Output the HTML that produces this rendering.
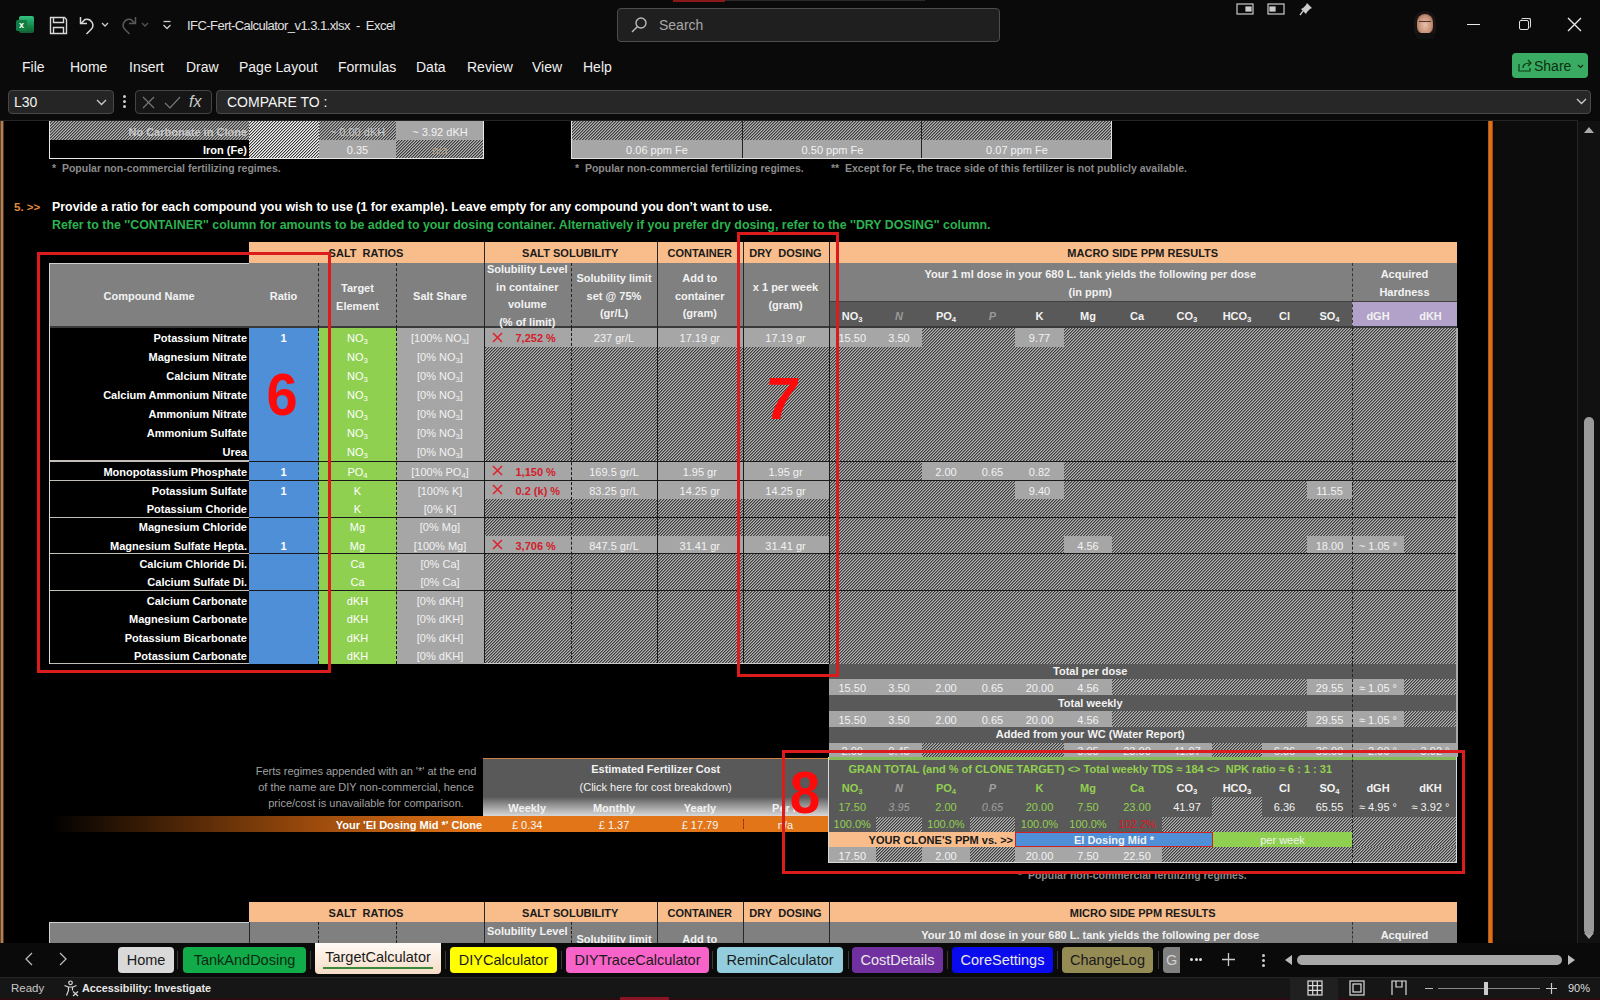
<!DOCTYPE html><html><head><meta charset="utf-8"><style>
html,body{margin:0;padding:0;width:1600px;height:1000px;overflow:hidden;background:#0a0a0a;font-family:"Liberation Sans",sans-serif;}
:root{--hd:repeating-linear-gradient(135deg,#3c3c3c 0px,#3c3c3c 0.7071px,#7a7a7a 0.7071px,#7a7a7a 1.4142px,#b4b4b4 1.4142px,#b4b4b4 2.1213px);--hl:repeating-linear-gradient(135deg,#383838 0px,#383838 0.7071px,#b0b0b0 0.7071px,#b0b0b0 1.4142px,#f4f4f4 1.4142px,#f4f4f4 2.1213px);}
.a{position:absolute;box-sizing:border-box;}
.t{position:absolute;display:flex;align-items:center;white-space:nowrap;line-height:1;box-sizing:border-box;}
sub{font-size:70%;vertical-align:-2px;line-height:0;}
.ch{color:#fff;}
</style></head><body>

<div class="a" style="left:0px;top:0px;width:1600px;height:121px;background:#0a0a0a;"></div>
<div class="a" style="left:19px;top:16px;width:15px;height:17px;background:linear-gradient(#33c481 0,#21a366 30%,#107c41 70%,#185c37 100%);border-radius:2px;"></div>
<div class="a" style="left:16px;top:20px;width:11px;height:11px;background:#107c41;border-radius:1.5px;"></div>
<div class="t" style="left:16px;top:20px;width:11px;height:11px;justify-content:center;color:#fff;font-size:9px;font-weight:bold;padding-top:0px;"><span>x</span></div>
<svg class="a" style="left:49px;top:16px" width="19" height="19" viewBox="0 0 19 19" fill="none" stroke="#d8d8d8" stroke-width="1.4"><path d="M1.5 1.5h14l2 2v14h-16z"/><path d="M4.5 1.5v5h10v-5"/><path d="M4.5 17.5v-6h10v6"/></svg>
<svg class="a" style="left:78px;top:15px" width="20" height="20" viewBox="0 0 20 20" fill="none" stroke="#d8d8d8" stroke-width="1.5"><path d="M2.5 2v6.5h6.5"/><path d="M3 8.5L7 4.5A6 6 0 0 1 13 14.5L8.5 19"/></svg>
<svg class="a" style="left:101px;top:22px" width="8" height="6" viewBox="0 0 8 6" fill="none" stroke="#ccc" stroke-width="1.3"><path d="M1 1l3 3 3-3"/></svg>
<svg class="a" style="left:118px;top:15px" width="20" height="20" viewBox="0 0 20 20" fill="none" stroke="#5a5a5a" stroke-width="1.5"><path d="M17.5 2v6.5h-6.5"/><path d="M17 8.5L13 4.5A6 6 0 0 0 7 14.5L11.5 19"/></svg>
<svg class="a" style="left:141px;top:22px" width="8" height="6" viewBox="0 0 8 6" fill="none" stroke="#555" stroke-width="1.3"><path d="M1 1l3 3 3-3"/></svg>
<svg class="a" style="left:162px;top:20px" width="10" height="10" viewBox="0 0 10 10" fill="none" stroke="#ccc" stroke-width="1.3"><path d="M1.5 1.5h7"/><path d="M1.5 5l3.5 3.5L8.5 5"/></svg>
<div class="t" style="left:187px;top:14px;width:173px;height:22px;justify-content:flex-start;color:#e0e0e0;font-size:13px;font-weight:normal;padding-top:0px;letter-spacing:-0.55px;"><span>IFC-Fert-Calculator_v1.3.1.xlsx&nbsp; - &nbsp;Excel</span></div>
<div class="a" style="left:617px;top:8px;width:383px;height:34px;background:#1f1f1f;border:1px solid #4d4d4d;border-radius:4px;"></div>
<svg class="a" style="left:630px;top:16px" width="18" height="18" viewBox="0 0 18 18" fill="none" stroke="#bbb" stroke-width="1.4"><circle cx="11" cy="7" r="5"/><path d="M7.5 10.5L2 16"/></svg>
<div class="t" style="left:659px;top:14px;width:101px;height:22px;justify-content:flex-start;color:#a8a8a8;font-size:14px;font-weight:normal;padding-top:0px;"><span>Search</span></div>
<div class="a" style="left:673px;top:0px;width:52px;height:2px;background:#8a1a1a;"></div>
<div class="a" style="left:725px;top:0px;width:200px;height:1px;background:#2a2a2a;"></div>
<svg class="a" style="left:1236px;top:2px" width="20" height="14" viewBox="0 0 20 14" fill="none" stroke="#ccc" stroke-width="1.2"><rect x="1" y="2" width="16" height="10"/><rect x="10" y="5" width="5" height="4" fill="#ccc"/></svg>
<svg class="a" style="left:1267px;top:2px" width="20" height="14" viewBox="0 0 20 14" fill="none" stroke="#ccc" stroke-width="1.2"><rect x="1" y="2" width="16" height="10"/><rect x="3" y="5" width="5" height="4" fill="#ccc"/></svg>
<svg class="a" style="left:1299px;top:2px" width="14" height="14" viewBox="0 0 14 14" fill="#ccc"><path d="M8 1l5 5-2 1-3 3-1 2-5-5 2-1 3-3z"/><path d="M4 9l-3 4" stroke="#ccc" stroke-width="1.3"/></svg>
<div class="a" style="left:1414px;top:11px;width:22px;height:28px;border-radius:11px 11px 9px 9px;background:#1a1412;"></div>
<div class="a" style="left:1417px;top:14px;width:16px;height:20px;border-radius:8px 8px 7px 7px;background:radial-gradient(ellipse at 50% 55%,#e8c0a8 0,#c89278 55%,#6a4a3c 100%);"></div>
<div class="a" style="left:1416px;top:33px;width:18px;height:6px;background:#101010;border-radius:4px 4px 2px 2px;"></div>
<div class="a" style="left:1419px;top:21px;width:12px;height:1px;background:#4a3a34;"></div>
<div class="a" style="left:1467px;top:24px;width:13px;height:1px;background:#e8e8e8;"></div>
<div class="a" style="left:1519px;top:20px;width:10px;height:10px;border:1.3px solid #e0e0e0;border-radius:2px;"></div>
<div class="a" style="left:1521px;top:18px;width:10px;height:10px;border-top:1.3px solid #e0e0e0;border-right:1.3px solid #e0e0e0;border-radius:2px;"></div>
<svg class="a" style="left:1567px;top:17px" width="15" height="15" viewBox="0 0 15 15" stroke="#e8e8e8" stroke-width="1.4"><path d="M1 1l13 13M14 1L1 14"/></svg>
<div class="t" style="left:22px;top:56px;width:120px;height:21px;justify-content:flex-start;color:#f0f0f0;font-size:14px;font-weight:normal;padding-top:0px;"><span>File</span></div>
<div class="t" style="left:70px;top:56px;width:120px;height:21px;justify-content:flex-start;color:#f0f0f0;font-size:14px;font-weight:normal;padding-top:0px;"><span>Home</span></div>
<div class="t" style="left:129px;top:56px;width:120px;height:21px;justify-content:flex-start;color:#f0f0f0;font-size:14px;font-weight:normal;padding-top:0px;"><span>Insert</span></div>
<div class="t" style="left:186px;top:56px;width:120px;height:21px;justify-content:flex-start;color:#f0f0f0;font-size:14px;font-weight:normal;padding-top:0px;"><span>Draw</span></div>
<div class="t" style="left:239px;top:56px;width:120px;height:21px;justify-content:flex-start;color:#f0f0f0;font-size:14px;font-weight:normal;padding-top:0px;"><span>Page Layout</span></div>
<div class="t" style="left:338px;top:56px;width:120px;height:21px;justify-content:flex-start;color:#f0f0f0;font-size:14px;font-weight:normal;padding-top:0px;"><span>Formulas</span></div>
<div class="t" style="left:416px;top:56px;width:120px;height:21px;justify-content:flex-start;color:#f0f0f0;font-size:14px;font-weight:normal;padding-top:0px;"><span>Data</span></div>
<div class="t" style="left:467px;top:56px;width:120px;height:21px;justify-content:flex-start;color:#f0f0f0;font-size:14px;font-weight:normal;padding-top:0px;"><span>Review</span></div>
<div class="t" style="left:532px;top:56px;width:120px;height:21px;justify-content:flex-start;color:#f0f0f0;font-size:14px;font-weight:normal;padding-top:0px;"><span>View</span></div>
<div class="t" style="left:583px;top:56px;width:120px;height:21px;justify-content:flex-start;color:#f0f0f0;font-size:14px;font-weight:normal;padding-top:0px;"><span>Help</span></div>
<div class="a" style="left:1512px;top:53px;width:76px;height:25px;background:#4caf50;border-radius:4px;background:#3aab62;"></div>
<svg class="a" style="left:1518px;top:59px" width="14" height="13" viewBox="0 0 14 13" fill="none" stroke="#0a3a10" stroke-width="1.2"><path d="M1 5v7h11v-3"/><path d="M5 9c0-4 3-5 7-5"/><path d="M10 1l3 3-3 3"/></svg>
<div class="t" style="left:1534px;top:56px;width:41px;height:20px;justify-content:flex-start;color:#0d2f12;font-size:14px;font-weight:normal;padding-top:0px;"><span>Share</span></div>
<svg class="a" style="left:1577px;top:64px" width="7" height="5" viewBox="0 0 7 5" fill="none" stroke="#0d2f12" stroke-width="1.2"><path d="M1 1l2.5 2.5L6 1"/></svg>
<div class="a" style="left:8px;top:90px;width:106px;height:24px;background:#252525;border:1px solid #484848;border-radius:4px;"></div>
<div class="t" style="left:14px;top:90px;width:46px;height:24px;justify-content:flex-start;color:#f0f0f0;font-size:14px;font-weight:normal;padding-top:0px;"><span>L30</span></div>
<svg class="a" style="left:96px;top:99px" width="11" height="7" viewBox="0 0 11 7" fill="none" stroke="#ccc" stroke-width="1.3"><path d="M1 1l4.5 4.5L10 1"/></svg>
<div class="a" style="left:123px;top:95px;width:3px;height:3px;background:#ccc;border-radius:2px;"></div>
<div class="a" style="left:123px;top:100px;width:3px;height:3px;background:#ccc;border-radius:2px;"></div>
<div class="a" style="left:123px;top:105px;width:3px;height:3px;background:#ccc;border-radius:2px;"></div>
<div class="a" style="left:135px;top:90px;width:77px;height:24px;background:#161616;border:1px solid #444;border-radius:4px;"></div>
<svg class="a" style="left:142px;top:96px" width="13" height="13" viewBox="0 0 13 13" stroke="#777" stroke-width="1.2"><path d="M1 1l11 11M12 1L1 12"/></svg>
<svg class="a" style="left:164px;top:96px" width="17" height="13" viewBox="0 0 17 13" fill="none" stroke="#777" stroke-width="1.2"><path d="M1 7l5 5L16 1"/></svg>
<div class="t" style="left:189px;top:91px;width:21px;height:22px;justify-content:flex-start;color:#c8c8c8;font-size:16px;font-weight:normal;padding-top:0px;font-family:"Liberation Serif",serif;"><span><i>fx</i></span></div>
<div class="a" style="left:216px;top:90px;width:1375px;height:24px;background:#272727;border:1px solid #4a4a4a;border-radius:4px;"></div>
<div class="t" style="left:227px;top:90px;width:273px;height:24px;justify-content:flex-start;color:#f5f5f5;font-size:14px;font-weight:normal;padding-top:0px;"><span>COMPARE TO :</span></div>
<svg class="a" style="left:1576px;top:98px" width="11" height="7" viewBox="0 0 11 7" fill="none" stroke="#ccc" stroke-width="1.3"><path d="M1 1l4.5 4.5L10 1"/></svg>
<div class="a" style="left:0px;top:121px;width:1578px;height:822px;background:#000;"></div>
<div class="a" style="left:0px;top:120px;width:1578px;height:1px;background:#242424;"></div>
<div class="a" style="left:0px;top:121px;width:1px;height:822px;background:#5e4630;"></div>
<div class="a" style="left:1px;top:121px;width:2px;height:822px;background:#b08058;"></div>
<div class="a" style="left:3px;top:121px;width:1px;height:822px;background:#5a3010;"></div>
<div class="a" style="left:1488px;top:121px;width:1px;height:822px;background:#b05a20;"></div>
<div class="a" style="left:1489px;top:121px;width:3px;height:822px;background:#dc7014;"></div>
<div class="a" style="left:1492px;top:121px;width:1px;height:822px;background:#9a4814;"></div>
<div class="a" style="left:1493px;top:121px;width:2px;height:822px;background:#140404;"></div>
<div class="a" style="left:1495px;top:121px;width:83px;height:822px;background:#0c0c0c;"></div>
<div class="a" style="left:1577px;top:121px;width:1px;height:822px;background:#262626;"></div>
<div class="a" style="left:1578px;top:121px;width:22px;height:822px;background:#111111;"></div>
<svg class="a" style="left:1583px;top:125px" width="12" height="9" viewBox="0 0 12 9" fill="#aaa"><path d="M1 8L6 2l5 6z"/></svg>
<svg class="a" style="left:1583px;top:932px" width="12" height="9" viewBox="0 0 12 9" fill="#aaa"><path d="M1 1l5 6 5-6z"/></svg>
<div class="a" style="left:1584px;top:417px;width:10px;height:518px;background:#9a9a9a;border-radius:5px;"></div>
<div class="a" style="left:49px;top:121px;width:200px;height:19px;background:var(--hd);"></div>
<div class="t" style="left:49px;top:121px;width:198px;height:19px;justify-content:flex-end;color:#c8c8c8;font-size:11px;font-weight:bold;padding-top:3px;"><span>No Carbonate in Clone</span></div>
<div class="a" style="left:249px;top:121px;width:70px;height:37px;background:var(--hl);"></div>
<div class="a" style="left:319px;top:121px;width:77px;height:19px;background:var(--hd);"></div>
<div class="t" style="left:319px;top:121px;width:77px;height:19px;justify-content:center;color:#c8c8c8;font-size:11px;font-weight:normal;padding-top:3px;"><span>~ 0.00 dKH</span></div>
<div class="a" style="left:396px;top:121px;width:88px;height:19px;background:#a6a6a6;"></div>
<div class="t" style="left:396px;top:121px;width:88px;height:19px;justify-content:center;color:#f2f2f2;font-size:11px;font-weight:normal;padding-top:3px;"><span>~ 3.92 dKH</span></div>
<div class="a" style="left:49px;top:140px;width:200px;height:18px;background:#000;"></div>
<div class="t" style="left:49px;top:140px;width:198px;height:18px;justify-content:flex-end;color:#fff;font-size:11px;font-weight:bold;padding-top:3px;"><span>Iron (Fe)</span></div>
<div class="a" style="left:319px;top:140px;width:77px;height:18px;background:#a6a6a6;"></div>
<div class="t" style="left:319px;top:140px;width:77px;height:18px;justify-content:center;color:#f2f2f2;font-size:11px;font-weight:normal;padding-top:3px;"><span>0.35</span></div>
<div class="a" style="left:396px;top:140px;width:88px;height:18px;background:var(--hd);"></div>
<div class="t" style="left:396px;top:140px;width:88px;height:18px;justify-content:center;color:#b8a890;font-size:11px;font-weight:normal;padding-top:3px;"><span>n/a</span></div>
<div class="a" style="left:49px;top:121px;width:435px;height:38px;border:1px solid #e8e8e8;border-top:none;"></div>
<div class="t" style="left:52px;top:158px;width:348px;height:18px;justify-content:flex-start;color:#8c8c8c;font-size:10.5px;font-weight:bold;padding-top:3px;"><span>*&nbsp; Popular non-commercial fertilizing regimes.</span></div>
<div class="a" style="left:571px;top:121px;width:541px;height:19px;background:var(--hd);"></div>
<div class="a" style="left:571px;top:140px;width:541px;height:18px;background:#a6a6a6;"></div>
<div class="t" style="left:571px;top:140px;width:172px;height:18px;justify-content:center;color:#f2f2f2;font-size:11px;font-weight:normal;padding-top:3px;"><span>0.06 ppm Fe</span></div>
<div class="t" style="left:743px;top:140px;width:179px;height:18px;justify-content:center;color:#f2f2f2;font-size:11px;font-weight:normal;padding-top:3px;"><span>0.50 ppm Fe</span></div>
<div class="t" style="left:922px;top:140px;width:190px;height:18px;justify-content:center;color:#f2f2f2;font-size:11px;font-weight:normal;padding-top:3px;"><span>0.07 ppm Fe</span></div>
<div class="a" style="left:742px;top:121px;width:1px;height:37px;background:#222;"></div>
<div class="a" style="left:921px;top:121px;width:1px;height:37px;background:#222;"></div>
<div class="a" style="left:571px;top:121px;width:541px;height:38px;border:1px solid #e0e0e0;border-top:none;"></div>
<div class="t" style="left:575px;top:158px;width:255px;height:18px;justify-content:flex-start;color:#8c8c8c;font-size:10.5px;font-weight:bold;padding-top:3px;"><span>*&nbsp; Popular non-commercial fertilizing regimes.</span></div>
<div class="t" style="left:831px;top:158px;width:469px;height:18px;justify-content:flex-start;color:#8c8c8c;font-size:10.5px;font-weight:bold;padding-top:3px;"><span>**&nbsp; Except for Fe, the trace side of this fertilizer is not publicly available.</span></div>
<div class="t" style="left:14px;top:197px;width:36px;height:18px;justify-content:flex-start;color:#e08a3c;font-size:11.5px;font-weight:bold;padding-top:3px;"><span>5. &gt;&gt;</span></div>
<div class="t" style="left:52px;top:197px;width:748px;height:18px;justify-content:flex-start;color:#ffffff;font-size:12.4px;font-weight:bold;padding-top:3px;"><span>Provide a ratio for each compound you wish to use (1 for example). Leave empty for any compound you don’t want to use.</span></div>
<div class="t" style="left:52px;top:215px;width:948px;height:18px;justify-content:flex-start;color:#2cb24f;font-size:12.4px;font-weight:bold;padding-top:3px;"><span>Refer to the ''CONTAINER'' column for amounts to be added to your dosing container. Alternatively if you prefer dry dosing, refer to the ''DRY DOSING'' column.</span></div>
<div class="a" style="left:248.5px;top:241.5px;width:1208.5px;height:21.0px;background:#f8bd8b;"></div>
<div class="t" style="left:248.5px;top:241.5px;width:235.0px;height:21.0px;justify-content:center;color:#1a1a1a;font-size:11px;font-weight:bold;padding-top:3px;"><span>SALT&nbsp; RATIOS</span></div>
<div class="t" style="left:483.5px;top:241.5px;width:173.5px;height:21.0px;justify-content:center;color:#1a1a1a;font-size:11px;font-weight:bold;padding-top:3px;"><span>SALT SOLUBILITY</span></div>
<div class="t" style="left:657px;top:241.5px;width:85.5px;height:21.0px;justify-content:center;color:#1a1a1a;font-size:11px;font-weight:bold;padding-top:3px;"><span>CONTAINER</span></div>
<div class="t" style="left:742.5px;top:241.5px;width:86.0px;height:21.0px;justify-content:center;color:#1a1a1a;font-size:11px;font-weight:bold;padding-top:3px;"><span>DRY&nbsp; DOSING</span></div>
<div class="t" style="left:828.5px;top:241.5px;width:628.5px;height:21.0px;justify-content:center;color:#1a1a1a;font-size:11px;font-weight:bold;padding-top:3px;"><span>MACRO SIDE PPM RESULTS</span></div>
<div class="a" style="left:49.5px;top:262.5px;width:1407.5px;height:65.0px;background:#808080;"></div>
<div class="a" style="left:828.5px;top:301.5px;width:523.5px;height:26.0px;background:#595959;"></div>
<div class="a" style="left:1352px;top:301.5px;width:105px;height:26.0px;background:#b2a1c8;"></div>
<div class="a" style="left:828.5px;top:301px;width:628.5px;height:1.1999999999999886px;background:#404040;"></div>
<div class="a" style="left:49.5px;top:326.3px;width:1407.5px;height:1.3999999999999773px;background:#3a3a3a;"></div>
<div class="a" style="left:49.5px;top:262.5px;width:199.0px;height:1.0px;background:#cfcfcf;"></div>
<div class="a" style="left:49px;top:262.5px;width:1px;height:65.0px;background:#d0d0d0;"></div>
<div class="t" style="left:49.5px;top:262.5px;width:199.0px;height:65.0px;justify-content:center;color:#f2f2f2;font-size:11px;font-weight:bold;padding-top:3px;"><span>Compound Name</span></div>
<div class="t" style="left:248.5px;top:262.5px;width:70.0px;height:65.0px;justify-content:center;color:#f2f2f2;font-size:11px;font-weight:bold;padding-top:3px;"><span>Ratio</span></div>
<div class="t" style="left:318.5px;top:262.5px;width:78.0px;height:65.0px;justify-content:center;color:#f2f2f2;font-size:11px;font-weight:bold;padding-top:3px;text-align:center;line-height:18px;"><span>Target<br>Element</span></div>
<div class="t" style="left:396.5px;top:262.5px;width:87.0px;height:65.0px;justify-content:center;color:#f2f2f2;font-size:11px;font-weight:bold;padding-top:3px;"><span>Salt Share</span></div>
<div class="t" style="left:483.5px;top:262.5px;width:87.5px;height:65.0px;justify-content:center;color:#f2f2f2;font-size:11px;font-weight:bold;padding-top:3px;text-align:center;line-height:17.5px;padding-top:2px;"><span>Solubility Level<br>in container<br>volume<br>(% of limit)</span></div>
<div class="t" style="left:571px;top:262.5px;width:86px;height:65.0px;justify-content:center;color:#f2f2f2;font-size:11px;font-weight:bold;padding-top:3px;text-align:center;line-height:17.5px;"><span>Solubility limit<br>set @ 75%<br>(gr/L)</span></div>
<div class="t" style="left:657px;top:262.5px;width:85.5px;height:65.0px;justify-content:center;color:#f2f2f2;font-size:11px;font-weight:bold;padding-top:3px;text-align:center;line-height:17.5px;"><span>Add to<br>container<br>(gram)</span></div>
<div class="t" style="left:742.5px;top:262.5px;width:86.0px;height:65.0px;justify-content:center;color:#f2f2f2;font-size:11px;font-weight:bold;padding-top:3px;text-align:center;line-height:17.5px;"><span>x 1 per week<br>(gram)</span></div>
<div class="t" style="left:828.5px;top:262.5px;width:523.5px;height:39.0px;justify-content:center;color:#f2f2f2;font-size:11px;font-weight:bold;padding-top:3px;text-align:center;line-height:17.5px;"><span>Your 1 ml dose in your 680 L. tank yields the following per dose<br>(in ppm)</span></div>
<div class="t" style="left:1352px;top:262.5px;width:105px;height:39.0px;justify-content:center;color:#f2f2f2;font-size:11px;font-weight:bold;padding-top:3px;text-align:center;line-height:17.5px;"><span>Acquired<br>Hardness</span></div>
<div class="t" style="left:828.5px;top:301.5px;width:47.5px;height:26.0px;justify-content:center;color:#f2f2f2;font-size:11px;font-weight:bold;padding-top:3px;"><span>NO<sub>3</sub></span></div>
<div class="t" style="left:876px;top:301.5px;width:46px;height:26.0px;justify-content:center;color:#9a9a9a;font-size:11px;font-weight:bold;font-style:italic;padding-top:3px;"><span>N</span></div>
<div class="t" style="left:922px;top:301.5px;width:48px;height:26.0px;justify-content:center;color:#f2f2f2;font-size:11px;font-weight:bold;padding-top:3px;"><span>PO<sub>4</sub></span></div>
<div class="t" style="left:970px;top:301.5px;width:45px;height:26.0px;justify-content:center;color:#9a9a9a;font-size:11px;font-weight:bold;font-style:italic;padding-top:3px;"><span>P</span></div>
<div class="t" style="left:1015px;top:301.5px;width:49px;height:26.0px;justify-content:center;color:#f2f2f2;font-size:11px;font-weight:bold;padding-top:3px;"><span>K</span></div>
<div class="t" style="left:1064px;top:301.5px;width:48px;height:26.0px;justify-content:center;color:#f2f2f2;font-size:11px;font-weight:bold;padding-top:3px;"><span>Mg</span></div>
<div class="t" style="left:1112px;top:301.5px;width:50px;height:26.0px;justify-content:center;color:#f2f2f2;font-size:11px;font-weight:bold;padding-top:3px;"><span>Ca</span></div>
<div class="t" style="left:1162px;top:301.5px;width:50px;height:26.0px;justify-content:center;color:#f2f2f2;font-size:11px;font-weight:bold;padding-top:3px;"><span>CO<sub>3</sub></span></div>
<div class="t" style="left:1212px;top:301.5px;width:50px;height:26.0px;justify-content:center;color:#f2f2f2;font-size:11px;font-weight:bold;padding-top:3px;"><span>HCO<sub>3</sub></span></div>
<div class="t" style="left:1262px;top:301.5px;width:45px;height:26.0px;justify-content:center;color:#f2f2f2;font-size:11px;font-weight:bold;padding-top:3px;"><span>Cl</span></div>
<div class="t" style="left:1307px;top:301.5px;width:45px;height:26.0px;justify-content:center;color:#f2f2f2;font-size:11px;font-weight:bold;padding-top:3px;"><span>SO<sub>4</sub></span></div>
<div class="t" style="left:1352px;top:301.5px;width:52px;height:26.0px;justify-content:center;color:#f2f2f2;font-size:11px;font-weight:bold;padding-top:3px;"><span>dGH</span></div>
<div class="t" style="left:1404px;top:301.5px;width:53px;height:26.0px;justify-content:center;color:#f2f2f2;font-size:11px;font-weight:bold;padding-top:3px;"><span>dKH</span></div>
<div class="a" style="left:483.5px;top:241.5px;width:1.0px;height:86.0px;background:#262626;"></div>
<div class="a" style="left:657px;top:241.5px;width:1px;height:86.0px;background:#262626;"></div>
<div class="a" style="left:742.5px;top:241.5px;width:1.0px;height:86.0px;background:#262626;"></div>
<div class="a" style="left:828.5px;top:241.5px;width:1.0px;height:86.0px;background:#262626;"></div>
<div class="a" style="left:318px;top:262.5px;width:0;height:65.0px;border-left:1px dashed #222;"></div>
<div class="a" style="left:396px;top:262.5px;width:0;height:65.0px;border-left:1px dashed #222;"></div>
<div class="a" style="left:571px;top:262.5px;width:0;height:65.0px;border-left:1px dashed #222;"></div>
<div class="a" style="left:1352px;top:262.5px;width:0;height:65.0px;border-left:1px dashed #333;"></div>
<div class="a" style="left:49.5px;top:327.5px;width:199.0px;height:336.0px;background:#000;"></div>
<div class="a" style="left:248.5px;top:327.5px;width:70.0px;height:336.0px;background:#4e8fd8;"></div>
<div class="a" style="left:318.5px;top:327.5px;width:78.0px;height:336.0px;background:#8fd051;"></div>
<div class="a" style="left:396.5px;top:327.5px;width:87.0px;height:336.0px;background:#a6a6a6;"></div>
<div class="a" style="left:483.5px;top:327.5px;width:973.5px;height:336.0px;background:var(--hd);"></div>
<div class="t" style="left:49.5px;top:327.5px;width:197.5px;height:19.0px;justify-content:flex-end;color:#fff;font-size:11px;font-weight:bold;padding-top:3px;"><span>Potassium Nitrate</span></div>
<div class="t" style="left:248.5px;top:327.5px;width:70.0px;height:19.0px;justify-content:center;color:#fff;font-size:11px;font-weight:bold;padding-top:3px;"><span>1</span></div>
<div class="t" style="left:318.5px;top:327.5px;width:78.0px;height:19.0px;justify-content:center;color:#fff;font-size:11px;font-weight:normal;padding-top:3px;"><span>NO<sub>3</sub></span></div>
<div class="t" style="left:396.5px;top:327.5px;width:87.0px;height:19.0px;justify-content:center;color:#f2f2f2;font-size:11px;font-weight:normal;padding-top:3px;"><span>[100% NO<sub>3</sub>]</span></div>
<div class="a" style="left:483.5px;top:327.5px;width:345.0px;height:19.0px;background:#a6a6a6;"></div>
<svg class="a" style="left:492px;top:331.5px" width="11" height="11" viewBox="0 0 11 11" stroke="#e0202a" stroke-width="1.5"><path d="M1 1l9 9M10 1l-9 9"/></svg>
<div class="t" style="left:483.5px;top:327.5px;width:87.5px;height:19.0px;justify-content:flex-start;color:#d2202a;font-size:11px;font-weight:bold;padding-top:3px;padding-left:32px;"><span>7,252 %</span></div>
<div class="t" style="left:571px;top:327.5px;width:86px;height:19.0px;justify-content:center;color:#f2f2f2;font-size:11px;font-weight:normal;padding-top:3px;"><span>237 gr/L</span></div>
<div class="t" style="left:657px;top:327.5px;width:85.5px;height:19.0px;justify-content:center;color:#f2f2f2;font-size:11px;font-weight:normal;padding-top:3px;"><span>17.19 gr</span></div>
<div class="t" style="left:742.5px;top:327.5px;width:86.0px;height:19.0px;justify-content:center;color:#f2f2f2;font-size:11px;font-weight:normal;padding-top:3px;"><span>17.19 gr</span></div>
<div class="a" style="left:828.5px;top:327.5px;width:47.5px;height:19.0px;background:#a6a6a6;"></div>
<div class="t" style="left:828.5px;top:327.5px;width:47.5px;height:19.0px;justify-content:center;color:#f2f2f2;font-size:11px;font-weight:normal;padding-top:3px;"><span>15.50</span></div>
<div class="a" style="left:876px;top:327.5px;width:46px;height:19.0px;background:#a6a6a6;"></div>
<div class="t" style="left:876px;top:327.5px;width:46px;height:19.0px;justify-content:center;color:#f2f2f2;font-size:11px;font-weight:normal;padding-top:3px;"><span>3.50</span></div>
<div class="a" style="left:1015px;top:327.5px;width:49px;height:19.0px;background:#a6a6a6;"></div>
<div class="t" style="left:1015px;top:327.5px;width:49px;height:19.0px;justify-content:center;color:#f2f2f2;font-size:11px;font-weight:normal;padding-top:3px;"><span>9.77</span></div>
<div class="t" style="left:49.5px;top:346.5px;width:197.5px;height:19.0px;justify-content:flex-end;color:#fff;font-size:11px;font-weight:bold;padding-top:3px;"><span>Magnesium Nitrate</span></div>
<div class="t" style="left:318.5px;top:346.5px;width:78.0px;height:19.0px;justify-content:center;color:#fff;font-size:11px;font-weight:normal;padding-top:3px;"><span>NO<sub>3</sub></span></div>
<div class="t" style="left:396.5px;top:346.5px;width:87.0px;height:19.0px;justify-content:center;color:#f2f2f2;font-size:11px;font-weight:normal;padding-top:3px;"><span>[0% NO<sub>3</sub>]</span></div>
<div class="t" style="left:49.5px;top:365.5px;width:197.5px;height:19.0px;justify-content:flex-end;color:#fff;font-size:11px;font-weight:bold;padding-top:3px;"><span>Calcium Nitrate</span></div>
<div class="t" style="left:318.5px;top:365.5px;width:78.0px;height:19.0px;justify-content:center;color:#fff;font-size:11px;font-weight:normal;padding-top:3px;"><span>NO<sub>3</sub></span></div>
<div class="t" style="left:396.5px;top:365.5px;width:87.0px;height:19.0px;justify-content:center;color:#f2f2f2;font-size:11px;font-weight:normal;padding-top:3px;"><span>[0% NO<sub>3</sub>]</span></div>
<div class="t" style="left:49.5px;top:384.5px;width:197.5px;height:19.0px;justify-content:flex-end;color:#fff;font-size:11px;font-weight:bold;padding-top:3px;"><span>Calcium Ammonium Nitrate</span></div>
<div class="t" style="left:318.5px;top:384.5px;width:78.0px;height:19.0px;justify-content:center;color:#fff;font-size:11px;font-weight:normal;padding-top:3px;"><span>NO<sub>3</sub></span></div>
<div class="t" style="left:396.5px;top:384.5px;width:87.0px;height:19.0px;justify-content:center;color:#f2f2f2;font-size:11px;font-weight:normal;padding-top:3px;"><span>[0% NO<sub>3</sub>]</span></div>
<div class="t" style="left:49.5px;top:403.5px;width:197.5px;height:19.0px;justify-content:flex-end;color:#fff;font-size:11px;font-weight:bold;padding-top:3px;"><span>Ammonium Nitrate</span></div>
<div class="t" style="left:318.5px;top:403.5px;width:78.0px;height:19.0px;justify-content:center;color:#fff;font-size:11px;font-weight:normal;padding-top:3px;"><span>NO<sub>3</sub></span></div>
<div class="t" style="left:396.5px;top:403.5px;width:87.0px;height:19.0px;justify-content:center;color:#f2f2f2;font-size:11px;font-weight:normal;padding-top:3px;"><span>[0% NO<sub>3</sub>]</span></div>
<div class="t" style="left:49.5px;top:422.5px;width:197.5px;height:19.0px;justify-content:flex-end;color:#fff;font-size:11px;font-weight:bold;padding-top:3px;"><span>Ammonium Sulfate</span></div>
<div class="t" style="left:318.5px;top:422.5px;width:78.0px;height:19.0px;justify-content:center;color:#fff;font-size:11px;font-weight:normal;padding-top:3px;"><span>NO<sub>3</sub></span></div>
<div class="t" style="left:396.5px;top:422.5px;width:87.0px;height:19.0px;justify-content:center;color:#f2f2f2;font-size:11px;font-weight:normal;padding-top:3px;"><span>[0% NO<sub>3</sub>]</span></div>
<div class="t" style="left:49.5px;top:441.5px;width:197.5px;height:19.5px;justify-content:flex-end;color:#fff;font-size:11px;font-weight:bold;padding-top:3px;"><span>Urea</span></div>
<div class="t" style="left:318.5px;top:441.5px;width:78.0px;height:19.5px;justify-content:center;color:#fff;font-size:11px;font-weight:normal;padding-top:3px;"><span>NO<sub>3</sub></span></div>
<div class="t" style="left:396.5px;top:441.5px;width:87.0px;height:19.5px;justify-content:center;color:#f2f2f2;font-size:11px;font-weight:normal;padding-top:3px;"><span>[0% NO<sub>3</sub>]</span></div>
<div class="t" style="left:49.5px;top:461px;width:197.5px;height:19.5px;justify-content:flex-end;color:#fff;font-size:11px;font-weight:bold;padding-top:3px;"><span>Monopotassium Phosphate</span></div>
<div class="t" style="left:248.5px;top:461px;width:70.0px;height:19.5px;justify-content:center;color:#fff;font-size:11px;font-weight:bold;padding-top:3px;"><span>1</span></div>
<div class="t" style="left:318.5px;top:461px;width:78.0px;height:19.5px;justify-content:center;color:#fff;font-size:11px;font-weight:normal;padding-top:3px;"><span>PO<sub>4</sub></span></div>
<div class="t" style="left:396.5px;top:461px;width:87.0px;height:19.5px;justify-content:center;color:#f2f2f2;font-size:11px;font-weight:normal;padding-top:3px;"><span>[100% PO<sub>4</sub>]</span></div>
<div class="a" style="left:483.5px;top:461px;width:345.0px;height:19.5px;background:#a6a6a6;"></div>
<svg class="a" style="left:492px;top:465.25px" width="11" height="11" viewBox="0 0 11 11" stroke="#e0202a" stroke-width="1.5"><path d="M1 1l9 9M10 1l-9 9"/></svg>
<div class="t" style="left:483.5px;top:461px;width:87.5px;height:19.5px;justify-content:flex-start;color:#d2202a;font-size:11px;font-weight:bold;padding-top:3px;padding-left:32px;"><span>1,150 %</span></div>
<div class="t" style="left:571px;top:461px;width:86px;height:19.5px;justify-content:center;color:#f2f2f2;font-size:11px;font-weight:normal;padding-top:3px;"><span>169.5 gr/L</span></div>
<div class="t" style="left:657px;top:461px;width:85.5px;height:19.5px;justify-content:center;color:#f2f2f2;font-size:11px;font-weight:normal;padding-top:3px;"><span>1.95 gr</span></div>
<div class="t" style="left:742.5px;top:461px;width:86.0px;height:19.5px;justify-content:center;color:#f2f2f2;font-size:11px;font-weight:normal;padding-top:3px;"><span>1.95 gr</span></div>
<div class="a" style="left:922px;top:461px;width:48px;height:19.5px;background:#a6a6a6;"></div>
<div class="t" style="left:922px;top:461px;width:48px;height:19.5px;justify-content:center;color:#f2f2f2;font-size:11px;font-weight:normal;padding-top:3px;"><span>2.00</span></div>
<div class="a" style="left:970px;top:461px;width:45px;height:19.5px;background:#a6a6a6;"></div>
<div class="t" style="left:970px;top:461px;width:45px;height:19.5px;justify-content:center;color:#f2f2f2;font-size:11px;font-weight:normal;padding-top:3px;"><span>0.65</span></div>
<div class="a" style="left:1015px;top:461px;width:49px;height:19.5px;background:#a6a6a6;"></div>
<div class="t" style="left:1015px;top:461px;width:49px;height:19.5px;justify-content:center;color:#f2f2f2;font-size:11px;font-weight:normal;padding-top:3px;"><span>0.82</span></div>
<div class="t" style="left:49.5px;top:480.5px;width:197.5px;height:18.5px;justify-content:flex-end;color:#fff;font-size:11px;font-weight:bold;padding-top:3px;"><span>Potassium Sulfate</span></div>
<div class="t" style="left:248.5px;top:480.5px;width:70.0px;height:18.5px;justify-content:center;color:#fff;font-size:11px;font-weight:bold;padding-top:3px;"><span>1</span></div>
<div class="t" style="left:318.5px;top:480.5px;width:78.0px;height:18.5px;justify-content:center;color:#fff;font-size:11px;font-weight:normal;padding-top:3px;"><span>K</span></div>
<div class="t" style="left:396.5px;top:480.5px;width:87.0px;height:18.5px;justify-content:center;color:#f2f2f2;font-size:11px;font-weight:normal;padding-top:3px;"><span>[100% K]</span></div>
<div class="a" style="left:483.5px;top:480.5px;width:345.0px;height:18.5px;background:#a6a6a6;"></div>
<svg class="a" style="left:492px;top:484.25px" width="11" height="11" viewBox="0 0 11 11" stroke="#e0202a" stroke-width="1.5"><path d="M1 1l9 9M10 1l-9 9"/></svg>
<div class="t" style="left:483.5px;top:480.5px;width:87.5px;height:18.5px;justify-content:flex-start;color:#d2202a;font-size:11px;font-weight:bold;padding-top:3px;padding-left:32px;"><span>0.2 (k) %</span></div>
<div class="t" style="left:571px;top:480.5px;width:86px;height:18.5px;justify-content:center;color:#f2f2f2;font-size:11px;font-weight:normal;padding-top:3px;"><span>83.25 gr/L</span></div>
<div class="t" style="left:657px;top:480.5px;width:85.5px;height:18.5px;justify-content:center;color:#f2f2f2;font-size:11px;font-weight:normal;padding-top:3px;"><span>14.25 gr</span></div>
<div class="t" style="left:742.5px;top:480.5px;width:86.0px;height:18.5px;justify-content:center;color:#f2f2f2;font-size:11px;font-weight:normal;padding-top:3px;"><span>14.25 gr</span></div>
<div class="a" style="left:1015px;top:480.5px;width:49px;height:18.5px;background:#a6a6a6;"></div>
<div class="t" style="left:1015px;top:480.5px;width:49px;height:18.5px;justify-content:center;color:#f2f2f2;font-size:11px;font-weight:normal;padding-top:3px;"><span>9.40</span></div>
<div class="a" style="left:1307px;top:480.5px;width:45px;height:18.5px;background:#a6a6a6;"></div>
<div class="t" style="left:1307px;top:480.5px;width:45px;height:18.5px;justify-content:center;color:#f2f2f2;font-size:11px;font-weight:normal;padding-top:3px;"><span>11.55</span></div>
<div class="t" style="left:49.5px;top:499px;width:197.5px;height:18.299999999999955px;justify-content:flex-end;color:#fff;font-size:11px;font-weight:bold;padding-top:3px;"><span>Potassium Choride</span></div>
<div class="t" style="left:318.5px;top:499px;width:78.0px;height:18.299999999999955px;justify-content:center;color:#fff;font-size:11px;font-weight:normal;padding-top:3px;"><span>K</span></div>
<div class="t" style="left:396.5px;top:499px;width:87.0px;height:18.299999999999955px;justify-content:center;color:#f2f2f2;font-size:11px;font-weight:normal;padding-top:3px;"><span>[0% K]</span></div>
<div class="t" style="left:49.5px;top:517.3px;width:197.5px;height:18.200000000000045px;justify-content:flex-end;color:#fff;font-size:11px;font-weight:bold;padding-top:3px;"><span>Magnesium Chloride</span></div>
<div class="t" style="left:318.5px;top:517.3px;width:78.0px;height:18.200000000000045px;justify-content:center;color:#fff;font-size:11px;font-weight:normal;padding-top:3px;"><span>Mg</span></div>
<div class="t" style="left:396.5px;top:517.3px;width:87.0px;height:18.200000000000045px;justify-content:center;color:#f2f2f2;font-size:11px;font-weight:normal;padding-top:3px;"><span>[0% Mg]</span></div>
<div class="t" style="left:49.5px;top:535.5px;width:197.5px;height:18.100000000000023px;justify-content:flex-end;color:#fff;font-size:11px;font-weight:bold;padding-top:3px;"><span>Magnesium Sulfate Hepta.</span></div>
<div class="t" style="left:248.5px;top:535.5px;width:70.0px;height:18.100000000000023px;justify-content:center;color:#fff;font-size:11px;font-weight:bold;padding-top:3px;"><span>1</span></div>
<div class="t" style="left:318.5px;top:535.5px;width:78.0px;height:18.100000000000023px;justify-content:center;color:#fff;font-size:11px;font-weight:normal;padding-top:3px;"><span>Mg</span></div>
<div class="t" style="left:396.5px;top:535.5px;width:87.0px;height:18.100000000000023px;justify-content:center;color:#f2f2f2;font-size:11px;font-weight:normal;padding-top:3px;"><span>[100% Mg]</span></div>
<div class="a" style="left:483.5px;top:535.5px;width:345.0px;height:18.100000000000023px;background:#a6a6a6;"></div>
<svg class="a" style="left:492px;top:539.05px" width="11" height="11" viewBox="0 0 11 11" stroke="#e0202a" stroke-width="1.5"><path d="M1 1l9 9M10 1l-9 9"/></svg>
<div class="t" style="left:483.5px;top:535.5px;width:87.5px;height:18.100000000000023px;justify-content:flex-start;color:#d2202a;font-size:11px;font-weight:bold;padding-top:3px;padding-left:32px;"><span>3,706 %</span></div>
<div class="t" style="left:571px;top:535.5px;width:86px;height:18.100000000000023px;justify-content:center;color:#f2f2f2;font-size:11px;font-weight:normal;padding-top:3px;"><span>847.5 gr/L</span></div>
<div class="t" style="left:657px;top:535.5px;width:85.5px;height:18.100000000000023px;justify-content:center;color:#f2f2f2;font-size:11px;font-weight:normal;padding-top:3px;"><span>31.41 gr</span></div>
<div class="t" style="left:742.5px;top:535.5px;width:86.0px;height:18.100000000000023px;justify-content:center;color:#f2f2f2;font-size:11px;font-weight:normal;padding-top:3px;"><span>31.41 gr</span></div>
<div class="a" style="left:1064px;top:535.5px;width:48px;height:18.100000000000023px;background:#a6a6a6;"></div>
<div class="t" style="left:1064px;top:535.5px;width:48px;height:18.100000000000023px;justify-content:center;color:#f2f2f2;font-size:11px;font-weight:normal;padding-top:3px;"><span>4.56</span></div>
<div class="a" style="left:1307px;top:535.5px;width:45px;height:18.100000000000023px;background:#a6a6a6;"></div>
<div class="t" style="left:1307px;top:535.5px;width:45px;height:18.100000000000023px;justify-content:center;color:#f2f2f2;font-size:11px;font-weight:normal;padding-top:3px;"><span>18.00</span></div>
<div class="a" style="left:1352px;top:535.5px;width:52px;height:18.100000000000023px;background:#a6a6a6;"></div>
<div class="t" style="left:1352px;top:535.5px;width:52px;height:18.100000000000023px;justify-content:center;color:#f2f2f2;font-size:11px;font-weight:normal;padding-top:3px;"><span>~ 1.05 °</span></div>
<div class="t" style="left:49.5px;top:553.6px;width:197.5px;height:18.399999999999977px;justify-content:flex-end;color:#fff;font-size:11px;font-weight:bold;padding-top:3px;"><span>Calcium Chloride Di.</span></div>
<div class="t" style="left:318.5px;top:553.6px;width:78.0px;height:18.399999999999977px;justify-content:center;color:#fff;font-size:11px;font-weight:normal;padding-top:3px;"><span>Ca</span></div>
<div class="t" style="left:396.5px;top:553.6px;width:87.0px;height:18.399999999999977px;justify-content:center;color:#f2f2f2;font-size:11px;font-weight:normal;padding-top:3px;"><span>[0% Ca]</span></div>
<div class="t" style="left:49.5px;top:572px;width:197.5px;height:18.399999999999977px;justify-content:flex-end;color:#fff;font-size:11px;font-weight:bold;padding-top:3px;"><span>Calcium Sulfate Di.</span></div>
<div class="t" style="left:318.5px;top:572px;width:78.0px;height:18.399999999999977px;justify-content:center;color:#fff;font-size:11px;font-weight:normal;padding-top:3px;"><span>Ca</span></div>
<div class="t" style="left:396.5px;top:572px;width:87.0px;height:18.399999999999977px;justify-content:center;color:#f2f2f2;font-size:11px;font-weight:normal;padding-top:3px;"><span>[0% Ca]</span></div>
<div class="t" style="left:49.5px;top:590.4px;width:197.5px;height:18.600000000000023px;justify-content:flex-end;color:#fff;font-size:11px;font-weight:bold;padding-top:3px;"><span>Calcium Carbonate</span></div>
<div class="t" style="left:318.5px;top:590.4px;width:78.0px;height:18.600000000000023px;justify-content:center;color:#fff;font-size:11px;font-weight:normal;padding-top:3px;"><span>dKH</span></div>
<div class="t" style="left:396.5px;top:590.4px;width:87.0px;height:18.600000000000023px;justify-content:center;color:#f2f2f2;font-size:11px;font-weight:normal;padding-top:3px;"><span>[0% dKH]</span></div>
<div class="t" style="left:49.5px;top:609px;width:197.5px;height:18.5px;justify-content:flex-end;color:#fff;font-size:11px;font-weight:bold;padding-top:3px;"><span>Magnesium Carbonate</span></div>
<div class="t" style="left:318.5px;top:609px;width:78.0px;height:18.5px;justify-content:center;color:#fff;font-size:11px;font-weight:normal;padding-top:3px;"><span>dKH</span></div>
<div class="t" style="left:396.5px;top:609px;width:87.0px;height:18.5px;justify-content:center;color:#f2f2f2;font-size:11px;font-weight:normal;padding-top:3px;"><span>[0% dKH]</span></div>
<div class="t" style="left:49.5px;top:627.5px;width:197.5px;height:18.0px;justify-content:flex-end;color:#fff;font-size:11px;font-weight:bold;padding-top:3px;"><span>Potassium Bicarbonate</span></div>
<div class="t" style="left:318.5px;top:627.5px;width:78.0px;height:18.0px;justify-content:center;color:#fff;font-size:11px;font-weight:normal;padding-top:3px;"><span>dKH</span></div>
<div class="t" style="left:396.5px;top:627.5px;width:87.0px;height:18.0px;justify-content:center;color:#f2f2f2;font-size:11px;font-weight:normal;padding-top:3px;"><span>[0% dKH]</span></div>
<div class="t" style="left:49.5px;top:645.5px;width:197.5px;height:18.0px;justify-content:flex-end;color:#fff;font-size:11px;font-weight:bold;padding-top:3px;"><span>Potassium Carbonate</span></div>
<div class="t" style="left:318.5px;top:645.5px;width:78.0px;height:18.0px;justify-content:center;color:#fff;font-size:11px;font-weight:normal;padding-top:3px;"><span>dKH</span></div>
<div class="t" style="left:396.5px;top:645.5px;width:87.0px;height:18.0px;justify-content:center;color:#f2f2f2;font-size:11px;font-weight:normal;padding-top:3px;"><span>[0% dKH]</span></div>
<div class="a" style="left:49.5px;top:460.3px;width:199.0px;height:1.3999999999999773px;background:#c4beb8;"></div>
<div class="a" style="left:248.5px;top:460.5px;width:1208.5px;height:1.0px;background:#1a1a1a;"></div>
<div class="a" style="left:49.5px;top:479.8px;width:199.0px;height:1.3999999999999773px;background:#c4beb8;"></div>
<div class="a" style="left:248.5px;top:480.0px;width:1208.5px;height:1.0px;background:#1a1a1a;"></div>
<div class="a" style="left:49.5px;top:516.5999999999999px;width:199.0px;height:1.3999999999999773px;background:#c4beb8;"></div>
<div class="a" style="left:248.5px;top:516.8px;width:1208.5px;height:1.0px;background:#1a1a1a;"></div>
<div class="a" style="left:49.5px;top:552.9px;width:199.0px;height:1.3999999999999773px;background:#c4beb8;"></div>
<div class="a" style="left:248.5px;top:553.1px;width:1208.5px;height:1.0px;background:#1a1a1a;"></div>
<div class="a" style="left:49.5px;top:589.6999999999999px;width:199.0px;height:1.3999999999999773px;background:#c4beb8;"></div>
<div class="a" style="left:248.5px;top:589.9px;width:1208.5px;height:1.0px;background:#1a1a1a;"></div>
<div class="a" style="left:49.5px;top:662.8px;width:199.0px;height:1.3999999999999773px;background:#c4beb8;"></div>
<div class="a" style="left:49px;top:327.5px;width:1px;height:336.0px;background:#d8d8d8;"></div>
<div class="a" style="left:318px;top:327.5px;width:0;height:336.0px;border-left:1px dashed #1a1a1a;"></div>
<div class="a" style="left:396px;top:327.5px;width:0;height:336.0px;border-left:1px dashed #1a1a1a;"></div>
<div class="a" style="left:483.5px;top:327.5px;width:1.0px;height:336.0px;background:#1a1a1a;"></div>
<div class="a" style="left:571px;top:327.5px;width:0;height:336.0px;border-left:1px dashed #1a1a1a;"></div>
<div class="a" style="left:657px;top:327.5px;width:1px;height:336.0px;background:#1a1a1a;"></div>
<div class="a" style="left:742.5px;top:327.5px;width:1.0px;height:336.0px;background:#1a1a1a;"></div>
<div class="a" style="left:828.5px;top:327.5px;width:1.0px;height:336.0px;background:#1a1a1a;"></div>
<div class="a" style="left:1352px;top:327.5px;width:0;height:336.0px;border-left:1px dashed #222;"></div>
<div class="a" style="left:483.5px;top:662.5px;width:345.0px;height:1.0px;background:#c8c8c8;"></div>
<div class="a" style="left:828.5px;top:663.5px;width:628.5px;height:15.5px;background:#595959;"></div>
<div class="t" style="left:828.5px;top:663.5px;width:523.5px;height:15.5px;justify-content:center;color:#f2f2f2;font-size:11px;font-weight:bold;padding-top:3px;padding-top:0;"><span>Total per dose</span></div>
<div class="a" style="left:828.5px;top:679px;width:628.5px;height:16px;background:var(--hd);"></div>
<div class="a" style="left:828.5px;top:679px;width:47.5px;height:16px;background:#a6a6a6;"></div>
<div class="t" style="left:828.5px;top:679px;width:47.5px;height:16px;justify-content:center;color:#f2f2f2;font-size:11px;font-weight:normal;padding-top:3px;"><span>15.50</span></div>
<div class="a" style="left:876px;top:679px;width:46px;height:16px;background:#a6a6a6;"></div>
<div class="t" style="left:876px;top:679px;width:46px;height:16px;justify-content:center;color:#f2f2f2;font-size:11px;font-weight:normal;padding-top:3px;"><span>3.50</span></div>
<div class="a" style="left:922px;top:679px;width:48px;height:16px;background:#a6a6a6;"></div>
<div class="t" style="left:922px;top:679px;width:48px;height:16px;justify-content:center;color:#f2f2f2;font-size:11px;font-weight:normal;padding-top:3px;"><span>2.00</span></div>
<div class="a" style="left:970px;top:679px;width:45px;height:16px;background:#a6a6a6;"></div>
<div class="t" style="left:970px;top:679px;width:45px;height:16px;justify-content:center;color:#f2f2f2;font-size:11px;font-weight:normal;padding-top:3px;"><span>0.65</span></div>
<div class="a" style="left:1015px;top:679px;width:49px;height:16px;background:#a6a6a6;"></div>
<div class="t" style="left:1015px;top:679px;width:49px;height:16px;justify-content:center;color:#f2f2f2;font-size:11px;font-weight:normal;padding-top:3px;"><span>20.00</span></div>
<div class="a" style="left:1064px;top:679px;width:48px;height:16px;background:#a6a6a6;"></div>
<div class="t" style="left:1064px;top:679px;width:48px;height:16px;justify-content:center;color:#f2f2f2;font-size:11px;font-weight:normal;padding-top:3px;"><span>4.56</span></div>
<div class="a" style="left:1307px;top:679px;width:45px;height:16px;background:#a6a6a6;"></div>
<div class="t" style="left:1307px;top:679px;width:45px;height:16px;justify-content:center;color:#f2f2f2;font-size:11px;font-weight:normal;padding-top:3px;"><span>29.55</span></div>
<div class="a" style="left:1352px;top:679px;width:52px;height:16px;background:#a6a6a6;"></div>
<div class="t" style="left:1352px;top:679px;width:52px;height:16px;justify-content:center;color:#f2f2f2;font-size:11px;font-weight:normal;padding-top:3px;"><span>≈ 1.05 °</span></div>
<div class="a" style="left:828.5px;top:695px;width:628.5px;height:16px;background:#595959;"></div>
<div class="t" style="left:828.5px;top:695px;width:523.5px;height:16px;justify-content:center;color:#f2f2f2;font-size:11px;font-weight:bold;padding-top:3px;padding-top:0;"><span>Total weekly</span></div>
<div class="a" style="left:828.5px;top:711px;width:628.5px;height:16px;background:var(--hd);"></div>
<div class="a" style="left:828.5px;top:711px;width:47.5px;height:16px;background:#a6a6a6;"></div>
<div class="t" style="left:828.5px;top:711px;width:47.5px;height:16px;justify-content:center;color:#f2f2f2;font-size:11px;font-weight:normal;padding-top:3px;"><span>15.50</span></div>
<div class="a" style="left:876px;top:711px;width:46px;height:16px;background:#a6a6a6;"></div>
<div class="t" style="left:876px;top:711px;width:46px;height:16px;justify-content:center;color:#f2f2f2;font-size:11px;font-weight:normal;padding-top:3px;"><span>3.50</span></div>
<div class="a" style="left:922px;top:711px;width:48px;height:16px;background:#a6a6a6;"></div>
<div class="t" style="left:922px;top:711px;width:48px;height:16px;justify-content:center;color:#f2f2f2;font-size:11px;font-weight:normal;padding-top:3px;"><span>2.00</span></div>
<div class="a" style="left:970px;top:711px;width:45px;height:16px;background:#a6a6a6;"></div>
<div class="t" style="left:970px;top:711px;width:45px;height:16px;justify-content:center;color:#f2f2f2;font-size:11px;font-weight:normal;padding-top:3px;"><span>0.65</span></div>
<div class="a" style="left:1015px;top:711px;width:49px;height:16px;background:#a6a6a6;"></div>
<div class="t" style="left:1015px;top:711px;width:49px;height:16px;justify-content:center;color:#f2f2f2;font-size:11px;font-weight:normal;padding-top:3px;"><span>20.00</span></div>
<div class="a" style="left:1064px;top:711px;width:48px;height:16px;background:#a6a6a6;"></div>
<div class="t" style="left:1064px;top:711px;width:48px;height:16px;justify-content:center;color:#f2f2f2;font-size:11px;font-weight:normal;padding-top:3px;"><span>4.56</span></div>
<div class="a" style="left:1307px;top:711px;width:45px;height:16px;background:#a6a6a6;"></div>
<div class="t" style="left:1307px;top:711px;width:45px;height:16px;justify-content:center;color:#f2f2f2;font-size:11px;font-weight:normal;padding-top:3px;"><span>29.55</span></div>
<div class="a" style="left:1352px;top:711px;width:52px;height:16px;background:#a6a6a6;"></div>
<div class="t" style="left:1352px;top:711px;width:52px;height:16px;justify-content:center;color:#f2f2f2;font-size:11px;font-weight:normal;padding-top:3px;"><span>≈ 1.05 °</span></div>
<div class="a" style="left:828.5px;top:727px;width:628.5px;height:15.5px;background:#595959;"></div>
<div class="t" style="left:828.5px;top:727px;width:523.5px;height:15.5px;justify-content:center;color:#f2f2f2;font-size:11px;font-weight:bold;padding-top:3px;padding-top:0;"><span>Added from your WC (Water Report)</span></div>
<div class="a" style="left:828.5px;top:742.5px;width:628.5px;height:14.5px;background:var(--hd);"></div>
<div class="a" style="left:828.5px;top:742.5px;width:47.5px;height:14.5px;background:#a6a6a6;"></div>
<div class="t" style="left:828.5px;top:742.5px;width:47.5px;height:14.5px;justify-content:center;color:#f2f2f2;font-size:11px;font-weight:normal;padding-top:3px;"><span>2.00</span></div>
<div class="a" style="left:876px;top:742.5px;width:46px;height:14.5px;background:#a6a6a6;"></div>
<div class="t" style="left:876px;top:742.5px;width:46px;height:14.5px;justify-content:center;color:#f2f2f2;font-size:11px;font-weight:normal;padding-top:3px;"><span>0.45</span></div>
<div class="a" style="left:1064px;top:742.5px;width:48px;height:14.5px;background:#a6a6a6;"></div>
<div class="t" style="left:1064px;top:742.5px;width:48px;height:14.5px;justify-content:center;color:#f2f2f2;font-size:11px;font-weight:normal;padding-top:3px;"><span>3.05</span></div>
<div class="a" style="left:1112px;top:742.5px;width:50px;height:14.5px;background:#a6a6a6;"></div>
<div class="t" style="left:1112px;top:742.5px;width:50px;height:14.5px;justify-content:center;color:#f2f2f2;font-size:11px;font-weight:normal;padding-top:3px;"><span>23.00</span></div>
<div class="a" style="left:1162px;top:742.5px;width:50px;height:14.5px;background:#a6a6a6;"></div>
<div class="t" style="left:1162px;top:742.5px;width:50px;height:14.5px;justify-content:center;color:#f2f2f2;font-size:11px;font-weight:normal;padding-top:3px;"><span>41.97</span></div>
<div class="a" style="left:1262px;top:742.5px;width:45px;height:14.5px;background:#a6a6a6;"></div>
<div class="t" style="left:1262px;top:742.5px;width:45px;height:14.5px;justify-content:center;color:#f2f2f2;font-size:11px;font-weight:normal;padding-top:3px;"><span>6.36</span></div>
<div class="a" style="left:1307px;top:742.5px;width:45px;height:14.5px;background:#a6a6a6;"></div>
<div class="t" style="left:1307px;top:742.5px;width:45px;height:14.5px;justify-content:center;color:#f2f2f2;font-size:11px;font-weight:normal;padding-top:3px;"><span>36.00</span></div>
<div class="a" style="left:1352px;top:742.5px;width:52px;height:14.5px;background:#a6a6a6;"></div>
<div class="t" style="left:1352px;top:742.5px;width:52px;height:14.5px;justify-content:center;color:#f2f2f2;font-size:11px;font-weight:normal;padding-top:3px;"><span>≈ 2.90 °</span></div>
<div class="a" style="left:1404px;top:742.5px;width:53px;height:14.5px;background:#a6a6a6;"></div>
<div class="t" style="left:1404px;top:742.5px;width:53px;height:14.5px;justify-content:center;color:#f2f2f2;font-size:11px;font-weight:normal;padding-top:3px;"><span>≈ 3.92 °</span></div>
<div class="a" style="left:828.5px;top:756.5px;width:628.5px;height:3.0px;background:#86b85a;"></div>
<div class="a" style="left:828.5px;top:759.5px;width:628.5px;height:72.79999999999995px;background:#595959;"></div>
<div class="t" style="left:828.5px;top:758px;width:523.5px;height:19px;justify-content:center;color:#92d050;font-size:11px;font-weight:bold;padding-top:3px;"><span>GRAN TOTAL (and % of CLONE TARGET) &lt;&gt; Total weekly TDS ≈ 184 &lt;&gt;&nbsp; NPK ratio ≈ 6 : 1 : 31</span></div>
<div class="t" style="left:828.5px;top:777px;width:47.5px;height:19px;justify-content:center;color:#92d050;font-size:11px;font-weight:bold;padding-top:3px;"><span>NO<sub>3</sub></span></div>
<div class="t" style="left:876px;top:777px;width:46px;height:19px;justify-content:center;color:#a0a0a0;font-size:11px;font-weight:bold;font-style:italic;padding-top:3px;"><span>N</span></div>
<div class="t" style="left:922px;top:777px;width:48px;height:19px;justify-content:center;color:#92d050;font-size:11px;font-weight:bold;padding-top:3px;"><span>PO<sub>4</sub></span></div>
<div class="t" style="left:970px;top:777px;width:45px;height:19px;justify-content:center;color:#a0a0a0;font-size:11px;font-weight:bold;font-style:italic;padding-top:3px;"><span>P</span></div>
<div class="t" style="left:1015px;top:777px;width:49px;height:19px;justify-content:center;color:#92d050;font-size:11px;font-weight:bold;padding-top:3px;"><span>K</span></div>
<div class="t" style="left:1064px;top:777px;width:48px;height:19px;justify-content:center;color:#92d050;font-size:11px;font-weight:bold;padding-top:3px;"><span>Mg</span></div>
<div class="t" style="left:1112px;top:777px;width:50px;height:19px;justify-content:center;color:#92d050;font-size:11px;font-weight:bold;padding-top:3px;"><span>Ca</span></div>
<div class="t" style="left:1162px;top:777px;width:50px;height:19px;justify-content:center;color:#f2f2f2;font-size:11px;font-weight:bold;padding-top:3px;"><span>CO<sub>3</sub></span></div>
<div class="t" style="left:1212px;top:777px;width:50px;height:19px;justify-content:center;color:#f2f2f2;font-size:11px;font-weight:bold;padding-top:3px;"><span>HCO<sub>3</sub></span></div>
<div class="t" style="left:1262px;top:777px;width:45px;height:19px;justify-content:center;color:#f2f2f2;font-size:11px;font-weight:bold;padding-top:3px;"><span>Cl</span></div>
<div class="t" style="left:1307px;top:777px;width:45px;height:19px;justify-content:center;color:#f2f2f2;font-size:11px;font-weight:bold;padding-top:3px;"><span>SO<sub>4</sub></span></div>
<div class="t" style="left:1352px;top:777px;width:52px;height:19px;justify-content:center;color:#f2f2f2;font-size:11px;font-weight:bold;padding-top:3px;"><span>dGH</span></div>
<div class="t" style="left:1404px;top:777px;width:53px;height:19px;justify-content:center;color:#f2f2f2;font-size:11px;font-weight:bold;padding-top:3px;"><span>dKH</span></div>
<div class="a" style="left:1212px;top:797px;width:50px;height:19.5px;background:var(--hd);"></div>
<div class="t" style="left:828.5px;top:796px;width:47.5px;height:19.5px;justify-content:center;color:#92d050;font-size:11px;font-weight:normal;padding-top:3px;"><span>17.50</span></div>
<div class="t" style="left:876px;top:796px;width:46px;height:19.5px;justify-content:center;color:#a0a0a0;font-size:11px;font-weight:normal;font-style:italic;padding-top:3px;"><span>3.95</span></div>
<div class="t" style="left:922px;top:796px;width:48px;height:19.5px;justify-content:center;color:#92d050;font-size:11px;font-weight:normal;padding-top:3px;"><span>2.00</span></div>
<div class="t" style="left:970px;top:796px;width:45px;height:19.5px;justify-content:center;color:#a0a0a0;font-size:11px;font-weight:normal;font-style:italic;padding-top:3px;"><span>0.65</span></div>
<div class="t" style="left:1015px;top:796px;width:49px;height:19.5px;justify-content:center;color:#92d050;font-size:11px;font-weight:normal;padding-top:3px;"><span>20.00</span></div>
<div class="t" style="left:1064px;top:796px;width:48px;height:19.5px;justify-content:center;color:#92d050;font-size:11px;font-weight:normal;padding-top:3px;"><span>7.50</span></div>
<div class="t" style="left:1112px;top:796px;width:50px;height:19.5px;justify-content:center;color:#92d050;font-size:11px;font-weight:normal;padding-top:3px;"><span>23.00</span></div>
<div class="t" style="left:1162px;top:796px;width:50px;height:19.5px;justify-content:center;color:#f2f2f2;font-size:11px;font-weight:normal;padding-top:3px;"><span>41.97</span></div>
<div class="t" style="left:1262px;top:796px;width:45px;height:19.5px;justify-content:center;color:#f2f2f2;font-size:11px;font-weight:normal;padding-top:3px;"><span>6.36</span></div>
<div class="t" style="left:1307px;top:796px;width:45px;height:19.5px;justify-content:center;color:#f2f2f2;font-size:11px;font-weight:normal;padding-top:3px;"><span>65.55</span></div>
<div class="t" style="left:1352px;top:796px;width:52px;height:19.5px;justify-content:center;color:#f2f2f2;font-size:11px;font-weight:normal;padding-top:3px;"><span>≈ 4.95 °</span></div>
<div class="t" style="left:1404px;top:796px;width:53px;height:19.5px;justify-content:center;color:#f2f2f2;font-size:11px;font-weight:normal;padding-top:3px;"><span>≈ 3.92 °</span></div>
<div class="a" style="left:876px;top:816.5px;width:46px;height:15.799999999999955px;background:var(--hd);"></div>
<div class="a" style="left:970px;top:816.5px;width:45px;height:15.799999999999955px;background:var(--hd);"></div>
<div class="a" style="left:1162px;top:816.5px;width:295px;height:15.799999999999955px;background:var(--hd);"></div>
<div class="t" style="left:828.5px;top:815.5px;width:47.5px;height:15.799999999999955px;justify-content:center;color:#92d050;font-size:11px;font-weight:normal;padding-top:3px;"><span>100.0%</span></div>
<div class="t" style="left:922px;top:815.5px;width:48px;height:15.799999999999955px;justify-content:center;color:#92d050;font-size:11px;font-weight:normal;padding-top:3px;"><span>100.0%</span></div>
<div class="t" style="left:1015px;top:815.5px;width:49px;height:15.799999999999955px;justify-content:center;color:#92d050;font-size:11px;font-weight:normal;padding-top:3px;"><span>100.0%</span></div>
<div class="t" style="left:1064px;top:815.5px;width:48px;height:15.799999999999955px;justify-content:center;color:#92d050;font-size:11px;font-weight:normal;padding-top:3px;"><span>100.0%</span></div>
<div class="t" style="left:1112px;top:815.5px;width:50px;height:15.799999999999955px;justify-content:center;color:#e0141e;font-size:11px;font-weight:normal;padding-top:3px;"><span>102.2%</span></div>
<div class="a" style="left:828.5px;top:832.3px;width:186.5px;height:14.800000000000068px;background:#f8bd8b;"></div>
<div class="t" style="left:828.5px;top:831.3px;width:184.5px;height:14.800000000000068px;justify-content:flex-end;color:#1a1a1a;font-size:11px;font-weight:bold;padding-top:3px;"><span>YOUR CLONE'S PPM vs. &gt;&gt;</span></div>
<div class="a" style="left:1015px;top:832.3px;width:198px;height:14.800000000000068px;background:#4e8fd8;border:1px solid #d02020;"></div>
<div class="t" style="left:1015px;top:831.3px;width:198px;height:14.800000000000068px;justify-content:center;color:#f2f2f2;font-size:11px;font-weight:bold;padding-top:3px;"><span>EI Dosing Mid *</span></div>
<div class="a" style="left:1213px;top:832.3px;width:139px;height:14.800000000000068px;background:#8fd051;"></div>
<div class="t" style="left:1213px;top:831.3px;width:139px;height:14.800000000000068px;justify-content:center;color:#f2f2f2;font-size:11px;font-weight:normal;padding-top:3px;"><span>per week</span></div>
<div class="a" style="left:1352px;top:816.5px;width:105px;height:46.0px;background:var(--hd);"></div>
<div class="a" style="left:828.5px;top:847.1px;width:628.5px;height:15.399999999999977px;background:var(--hd);"></div>
<div class="a" style="left:828.5px;top:847.1px;width:47.5px;height:15.399999999999977px;background:#a6a6a6;"></div>
<div class="t" style="left:828.5px;top:847.1px;width:47.5px;height:15.399999999999977px;justify-content:center;color:#f2f2f2;font-size:11px;font-weight:normal;padding-top:3px;"><span>17.50</span></div>
<div class="a" style="left:922px;top:847.1px;width:48px;height:15.399999999999977px;background:#a6a6a6;"></div>
<div class="t" style="left:922px;top:847.1px;width:48px;height:15.399999999999977px;justify-content:center;color:#f2f2f2;font-size:11px;font-weight:normal;padding-top:3px;"><span>2.00</span></div>
<div class="a" style="left:1015px;top:847.1px;width:147px;height:15.399999999999977px;background:#a6a6a6;"></div>
<div class="t" style="left:1015px;top:847.1px;width:49px;height:15.399999999999977px;justify-content:center;color:#f2f2f2;font-size:11px;font-weight:normal;padding-top:3px;"><span>20.00</span></div>
<div class="t" style="left:1064px;top:847.1px;width:48px;height:15.399999999999977px;justify-content:center;color:#f2f2f2;font-size:11px;font-weight:normal;padding-top:3px;"><span>7.50</span></div>
<div class="t" style="left:1112px;top:847.1px;width:50px;height:15.399999999999977px;justify-content:center;color:#f2f2f2;font-size:11px;font-weight:normal;padding-top:3px;"><span>22.50</span></div>
<div class="a" style="left:828px;top:757px;width:629px;height:106px;border:1px solid #d8d8d8;border-top:none;"></div>
<div class="a" style="left:1352px;top:663.5px;width:0;height:199.0px;border-left:1px dashed #222;"></div>
<div class="a" style="left:1456px;top:327.5px;width:1.5px;height:429.5px;background:#a8a8a8;"></div>
<div class="t" style="left:1000px;top:865px;width:300px;height:18px;justify-content:flex-start;color:#8c8c8c;font-size:10.5px;font-weight:bold;padding-top:3px;padding-left:18px;"><span>*&nbsp; Popular non-commercial fertilizing regimes.</span></div>
<div class="t" style="left:254px;top:762px;width:224px;height:16px;justify-content:center;color:#a0a0a0;font-size:11px;font-weight:normal;padding-top:3px;"><span>Ferts regimes appended with an '*' at the end</span></div>
<div class="t" style="left:254px;top:778px;width:224px;height:16px;justify-content:center;color:#a0a0a0;font-size:11px;font-weight:normal;padding-top:3px;"><span>of the name are DIY non-commercial, hence</span></div>
<div class="t" style="left:254px;top:794px;width:224px;height:16px;justify-content:center;color:#a0a0a0;font-size:11px;font-weight:normal;padding-top:3px;"><span>price/cost is unavailable for comparison.</span></div>
<div class="a" style="left:483.4px;top:757.5px;width:344.6px;height:39.89999999999998px;background:#595959;border-top:1px solid #d08040;"></div>
<div class="t" style="left:483.4px;top:758.5px;width:344.6px;height:18.0px;justify-content:center;color:#f2f2f2;font-size:11px;font-weight:bold;padding-top:3px;"><span>Estimated Fertilizer Cost</span></div>
<div class="t" style="left:483.4px;top:777px;width:344.6px;height:18px;justify-content:center;color:#f2f2f2;font-size:11px;font-weight:normal;padding-top:3px;"><span>(Click here for cost breakdown)</span></div>
<div class="a" style="left:483.4px;top:797.4px;width:344.6px;height:18.600000000000023px;background:linear-gradient(#5a5a5a,#8a8a8a 35%,#d8d8d8 100%);"></div>
<div class="t" style="left:483.4px;top:798px;width:87.60000000000002px;height:18px;justify-content:center;color:#f2f2f2;font-size:11px;font-weight:bold;padding-top:3px;"><span>Weekly</span></div>
<div class="t" style="left:571px;top:798px;width:86px;height:18px;justify-content:center;color:#f2f2f2;font-size:11px;font-weight:bold;padding-top:3px;"><span>Monthly</span></div>
<div class="t" style="left:657px;top:798px;width:86px;height:18px;justify-content:center;color:#f2f2f2;font-size:11px;font-weight:bold;padding-top:3px;"><span>Yearly</span></div>
<div class="t" style="left:743px;top:798px;width:85px;height:18px;justify-content:center;color:#f2f2f2;font-size:11px;font-weight:bold;padding-top:3px;"><span>Per li</span></div>
<div class="a" style="left:50px;top:816px;width:433.4px;height:15.5px;background:linear-gradient(90deg,#000 0%,#1a0d03 10%,#9a4a0c 60%,#e37519 100%);"></div>
<div class="a" style="left:483.4px;top:816px;width:344.6px;height:15.5px;background:#e37519;"></div>
<div class="t" style="left:50px;top:816px;width:432px;height:15.5px;justify-content:flex-end;color:#fff;font-size:11px;font-weight:bold;padding-top:3px;"><span>Your 'EI Dosing Mid *' Clone</span></div>
<div class="t" style="left:483.4px;top:816px;width:87.60000000000002px;height:15.5px;justify-content:center;color:#f5f5f5;font-size:11px;font-weight:normal;padding-top:3px;"><span>£ 0.34</span></div>
<div class="t" style="left:571px;top:816px;width:86px;height:15.5px;justify-content:center;color:#f5f5f5;font-size:11px;font-weight:normal;padding-top:3px;"><span>£ 1.37</span></div>
<div class="t" style="left:657px;top:816px;width:86px;height:15.5px;justify-content:center;color:#f5f5f5;font-size:11px;font-weight:normal;padding-top:3px;"><span>£ 17.79</span></div>
<div class="t" style="left:743px;top:816px;width:85px;height:15.5px;justify-content:center;color:#f5f5f5;font-size:11px;font-weight:normal;padding-top:3px;"><span>n/a</span></div>
<div class="a" style="left:743px;top:819px;width:0;height:10px;border-left:1px dashed #a03010;"></div>
<div class="a" style="left:248.5px;top:901.6px;width:1208.5px;height:20.399999999999977px;background:#f8bd8b;"></div>
<div class="t" style="left:248.5px;top:901.6px;width:235.0px;height:20.399999999999977px;justify-content:center;color:#1a1a1a;font-size:11px;font-weight:bold;padding-top:3px;"><span>SALT&nbsp; RATIOS</span></div>
<div class="t" style="left:483.5px;top:901.6px;width:173.5px;height:20.399999999999977px;justify-content:center;color:#1a1a1a;font-size:11px;font-weight:bold;padding-top:3px;"><span>SALT SOLUBILITY</span></div>
<div class="t" style="left:657px;top:901.6px;width:85.5px;height:20.399999999999977px;justify-content:center;color:#1a1a1a;font-size:11px;font-weight:bold;padding-top:3px;"><span>CONTAINER</span></div>
<div class="t" style="left:742.5px;top:901.6px;width:86.0px;height:20.399999999999977px;justify-content:center;color:#1a1a1a;font-size:11px;font-weight:bold;padding-top:3px;"><span>DRY&nbsp; DOSING</span></div>
<div class="t" style="left:828.5px;top:901.6px;width:628.5px;height:20.399999999999977px;justify-content:center;color:#1a1a1a;font-size:11px;font-weight:bold;padding-top:3px;"><span>MICRO SIDE PPM RESULTS</span></div>
<div class="a" style="left:49.5px;top:922px;width:1407.5px;height:21px;background:#808080;"></div>
<div class="a" style="left:49.5px;top:922px;width:199.0px;height:1px;background:#cfcfcf;"></div>
<div class="a" style="left:49px;top:922px;width:1px;height:21px;background:#d0d0d0;"></div>
<div class="a" style="left:483.5px;top:901.6px;width:1.0px;height:41.39999999999998px;background:#262626;"></div>
<div class="a" style="left:657px;top:901.6px;width:1px;height:41.39999999999998px;background:#262626;"></div>
<div class="a" style="left:742.5px;top:901.6px;width:1.0px;height:41.39999999999998px;background:#262626;"></div>
<div class="a" style="left:828.5px;top:901.6px;width:1.0px;height:41.39999999999998px;background:#262626;"></div>
<div class="a" style="left:248.5px;top:922px;width:1.0px;height:21px;background:#262626;"></div>
<div class="a" style="left:318px;top:922px;width:0;height:21px;border-left:1px dashed #222;"></div>
<div class="a" style="left:396px;top:922px;width:0;height:21px;border-left:1px dashed #222;"></div>
<div class="a" style="left:571px;top:922px;width:0;height:21px;border-left:1px dashed #222;"></div>
<div class="a" style="left:1352px;top:922px;width:0;height:21px;border-left:1px dashed #333;"></div>
<div class="t" style="left:483.5px;top:922px;width:87.5px;height:15px;justify-content:center;color:#f2f2f2;font-size:11px;font-weight:bold;padding-top:3px;"><span>Solubility Level</span></div>
<div class="t" style="left:571px;top:930px;width:86px;height:16px;justify-content:center;color:#f2f2f2;font-size:11px;font-weight:bold;padding-top:3px;"><span>Solubility limit</span></div>
<div class="t" style="left:657px;top:930px;width:85.5px;height:16px;justify-content:center;color:#f2f2f2;font-size:11px;font-weight:bold;padding-top:3px;"><span>Add to</span></div>
<div class="t" style="left:828.5px;top:925px;width:523.5px;height:18px;justify-content:center;color:#f2f2f2;font-size:11px;font-weight:bold;padding-top:3px;"><span>Your 10 ml dose in your 680 L. tank yields the following per dose</span></div>
<div class="t" style="left:1352px;top:925px;width:105px;height:18px;justify-content:center;color:#f2f2f2;font-size:11px;font-weight:bold;padding-top:3px;"><span>Acquired</span></div>
<div class="a" style="left:37px;top:252px;width:294px;height:421px;border:3px solid #dc1c1c;"></div>
<div class="a" style="left:737px;top:232px;width:102px;height:445px;border:3px solid #dc1c1c;"></div>
<div class="a" style="left:782px;top:750px;width:683px;height:124px;border:3px solid #dc1c1c;"></div>
<div class="a" style="left:252px;top:364.5px;width:60px;height:60px;line-height:60px;text-align:center;font-size:59.5px;font-weight:bold;color:#ff0a0a;transform:scaleX(0.94) skewX(0deg);">6</div>
<div class="a" style="left:752px;top:368.5px;width:60px;height:60px;line-height:60px;text-align:center;font-size:59.5px;font-weight:bold;color:#ff0a0a;transform:scaleX(1.02) skewX(-6deg);">7</div>
<div class="a" style="left:774.5px;top:762.5px;width:60px;height:60px;line-height:60px;text-align:center;font-size:59.5px;font-weight:bold;color:#ff0a0a;transform:scaleX(0.92) skewX(0deg);">8</div>
<div class="a" style="left:0px;top:943px;width:1600px;height:34px;background:#0a0a0a;"></div>
<svg class="a" style="left:24px;top:952px" width="10" height="14" viewBox="0 0 10 14" fill="none" stroke="#bbb" stroke-width="1.3"><path d="M8 1L2 7l6 6"/></svg>
<svg class="a" style="left:58px;top:952px" width="10" height="14" viewBox="0 0 10 14" fill="none" stroke="#bbb" stroke-width="1.3"><path d="M2 1l6 6-6 6"/></svg>
<div class="a" style="left:118px;top:947px;width:56px;height:26px;background:#d9d9d9;border-radius:4px;"></div>
<div class="t" style="left:118px;top:947px;width:56px;height:26px;justify-content:center;color:#1a1a1a;font-size:14.5px;font-weight:normal;padding-top:0px;"><span>Home</span></div>
<div class="a" style="left:183px;top:947px;width:123px;height:26px;background:#12ab4a;border-radius:4px;"></div>
<div class="t" style="left:183px;top:947px;width:123px;height:26px;justify-content:center;color:#0a2a12;font-size:14.5px;font-weight:normal;padding-top:0px;"><span>TankAndDosing</span></div>
<div class="a" style="left:450px;top:947px;width:107px;height:26px;background:#ffff00;border-radius:4px;"></div>
<div class="t" style="left:450px;top:947px;width:107px;height:26px;justify-content:center;color:#1a1a1a;font-size:14.5px;font-weight:normal;padding-top:0px;"><span>DIYCalculator</span></div>
<div class="a" style="left:566px;top:947px;width:143px;height:26px;background:#f763c8;border-radius:4px;"></div>
<div class="t" style="left:566px;top:947px;width:143px;height:26px;justify-content:center;color:#1a1a1a;font-size:14.5px;font-weight:normal;padding-top:0px;"><span>DIYTraceCalculator</span></div>
<div class="a" style="left:717px;top:947px;width:126px;height:26px;background:#93cddd;border-radius:4px;"></div>
<div class="t" style="left:717px;top:947px;width:126px;height:26px;justify-content:center;color:#1a1a1a;font-size:14.5px;font-weight:normal;padding-top:0px;"><span>ReminCalculator</span></div>
<div class="a" style="left:852px;top:947px;width:91px;height:26px;background:#7030a0;border-radius:4px;"></div>
<div class="t" style="left:852px;top:947px;width:91px;height:26px;justify-content:center;color:#e8e8e8;font-size:14.5px;font-weight:normal;padding-top:0px;"><span>CostDetails</span></div>
<div class="a" style="left:952px;top:947px;width:101px;height:26px;background:#0a0aee;border-radius:4px;"></div>
<div class="t" style="left:952px;top:947px;width:101px;height:26px;justify-content:center;color:#e8e8e8;font-size:14.5px;font-weight:normal;padding-top:0px;"><span>CoreSettings</span></div>
<div class="a" style="left:1062px;top:947px;width:91px;height:26px;background:#958b55;border-radius:4px;"></div>
<div class="t" style="left:1062px;top:947px;width:91px;height:26px;justify-content:center;color:#1a1a1a;font-size:14.5px;font-weight:normal;padding-top:0px;"><span>ChangeLog</span></div>
<div class="a" style="left:315px;top:943px;width:126px;height:31px;background:linear-gradient(#fffaf5,#f6dcc6);border-radius:0 0 4px 4px;"></div>
<div class="t" style="left:315px;top:945px;width:126px;height:25px;justify-content:center;color:#1a1a1a;font-size:14.5px;font-weight:normal;padding-top:0px;"><span>TargetCalculator</span></div>
<div class="a" style="left:323px;top:967px;width:110px;height:2px;background:#3a8a3a;"></div>
<div class="a" style="left:1163px;top:947px;width:17px;height:26px;background:#808080;border-radius:4px 0 0 4px;"></div>
<div class="t" style="left:1163px;top:947px;width:17px;height:26px;justify-content:flex-start;color:#d0d0d0;font-size:14.5px;font-weight:normal;padding-top:0px;padding-left:3px;"><span>G</span></div>
<div class="a" style="left:177px;top:951px;width:1px;height:18px;background:#3a3a3a;"></div>
<div class="a" style="left:310px;top:951px;width:1px;height:18px;background:#3a3a3a;"></div>
<div class="a" style="left:445px;top:951px;width:1px;height:18px;background:#3a3a3a;"></div>
<div class="a" style="left:561px;top:951px;width:1px;height:18px;background:#3a3a3a;"></div>
<div class="a" style="left:712px;top:951px;width:1px;height:18px;background:#3a3a3a;"></div>
<div class="a" style="left:848px;top:951px;width:1px;height:18px;background:#3a3a3a;"></div>
<div class="a" style="left:947px;top:951px;width:1px;height:18px;background:#3a3a3a;"></div>
<div class="a" style="left:1057px;top:951px;width:1px;height:18px;background:#3a3a3a;"></div>
<div class="a" style="left:1158px;top:951px;width:1px;height:18px;background:#3a3a3a;"></div>
<div class="a" style="left:1190px;top:957.5px;width:3px;height:3.0px;background:#e0e0e0;border-radius:50%;"></div>
<div class="a" style="left:1194.5px;top:957.5px;width:3.0px;height:3.0px;background:#e0e0e0;border-radius:50%;"></div>
<div class="a" style="left:1199px;top:957.5px;width:3px;height:3.0px;background:#e0e0e0;border-radius:50%;"></div>
<svg class="a" style="left:1222px;top:953px" width="13" height="13" viewBox="0 0 13 13" stroke="#ccc" stroke-width="1.3"><path d="M6.5 0v13M0 6.5h13"/></svg>
<div class="a" style="left:1262px;top:954px;width:3px;height:3px;background:#ccc;border-radius:2px;"></div>
<div class="a" style="left:1262px;top:959px;width:3px;height:3px;background:#ccc;border-radius:2px;"></div>
<div class="a" style="left:1262px;top:964px;width:3px;height:3px;background:#ccc;border-radius:2px;"></div>
<svg class="a" style="left:1285px;top:955px" width="8" height="10" viewBox="0 0 8 10" fill="#bbb"><path d="M7 0v10L0 5z"/></svg>
<div class="a" style="left:1297px;top:955px;width:265px;height:10px;background:#a8a8a8;border-radius:5px;"></div>
<svg class="a" style="left:1567px;top:955px" width="8" height="10" viewBox="0 0 8 10" fill="#bbb"><path d="M1 0v10l7-5z"/></svg>
<div class="a" style="left:0px;top:977px;width:1600px;height:23px;background:#161616;"></div>
<div class="a" style="left:0px;top:998px;width:1600px;height:2px;background:#2a0c12;"></div>
<div class="a" style="left:620px;top:997px;width:49px;height:3px;background:#8a1424;"></div>
<div class="a" style="left:0px;top:977px;width:1600px;height:1px;background:#262626;"></div>
<div class="t" style="left:11px;top:979px;width:49px;height:19px;justify-content:flex-start;color:#c8c8c8;font-size:11.5px;font-weight:normal;padding-top:0px;"><span>Ready</span></div>
<svg class="a" style="left:63px;top:980px" width="17" height="17" viewBox="0 0 17 17" fill="none" stroke="#d8d8d8" stroke-width="1.2"><circle cx="7.5" cy="2.8" r="1.8"/><path d="M1.5 5.5l3.5 1.5h5l3.5-1.5"/><path d="M5.5 7v3.5L3.5 15.5M9.5 7v3.5"/><path d="M10 11.5l5 4.5M15 11.5l-5 4.5"/></svg>
<div class="t" style="left:82px;top:979px;width:218px;height:19px;justify-content:flex-start;color:#e8e8e8;font-size:10.8px;font-weight:bold;padding-top:0px;"><span>Accessibility: Investigate</span></div>
<div class="a" style="left:1290px;top:977px;width:48px;height:23px;background:#202020;"></div>
<svg class="a" style="left:1307px;top:980px" width="16" height="16" viewBox="0 0 16 16" fill="none" stroke="#ddd" stroke-width="1.2"><rect x="1" y="1" width="14" height="14"/><path d="M1 5.7h14M1 10.3h14M5.7 1v14M10.3 1v14"/></svg>
<svg class="a" style="left:1349px;top:980px" width="16" height="16" viewBox="0 0 16 16" fill="none" stroke="#ddd" stroke-width="1.2"><rect x="1" y="1" width="14" height="14"/><rect x="4" y="4" width="8" height="8"/></svg>
<svg class="a" style="left:1391px;top:980px" width="16" height="16" viewBox="0 0 16 16" fill="none" stroke="#ddd" stroke-width="1.2"><path d="M1 15V1h14v14"/><path d="M5 1v6h6V1"/></svg>
<div class="a" style="left:1425px;top:988px;width:8px;height:1px;background:#bbb;"></div>
<div class="a" style="left:1438px;top:988px;width:102px;height:1px;background:#888;"></div>
<div class="a" style="left:1484px;top:982px;width:4px;height:13px;background:#ccc;"></div>
<svg class="a" style="left:1546px;top:983px" width="11" height="11" viewBox="0 0 11 11" stroke="#ccc" stroke-width="1.2"><path d="M5.5 0v11M0 5.5h11"/></svg>
<div class="t" style="left:1568px;top:979px;width:30px;height:19px;justify-content:flex-start;color:#ddd;font-size:11px;font-weight:normal;padding-top:0px;"><span>90%</span></div>
</body></html>
